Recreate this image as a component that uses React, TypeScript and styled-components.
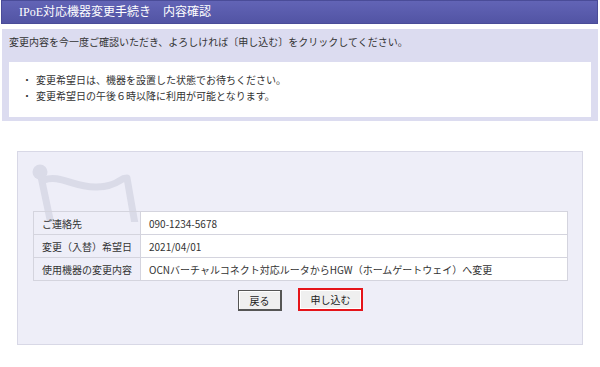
import { createGlobalStyle, styled } from "styled-components";

const GlobalStyle = createGlobalStyle`
body{
  margin:0;
  background:#fff;
  font-family:"Noto Sans CJK JP","Noto Sans",sans-serif;
  color:#333;
}
`;

const Page = styled.div`
width:600px;
height:367px;
overflow:hidden;
`;

const Header = styled.h1`
margin:0 2px 0 1px;
height:22px;
border:1px solid #4a4c98;
background:linear-gradient(#6264b6, #5254a4);
color:#fff;
font-size:12px;
font-weight:normal;
line-height:22px;
padding-left:17px;
font-family:"Liberation Serif","Noto Sans CJK JP",serif;
`;

const Notice = styled.section`
margin:5px 2px 0;
background:#dcdcf0;
padding:6px 7px 4px;
`;

const Lead = styled.p`
margin:0 0 13px;
font-size:10px;
line-height:14px;
`;

const NoteBox = styled.ul`
margin:0;
list-style:none;
background:#fff;
padding:10px 0 13px 13px;
font-size:10px;
line-height:16px;
li::before{
  content:"・";
  margin-right:4px;
}
`;

const ConfirmBox = styled.section`
position:relative;
margin:30px 17px 0;
background:#eeeef8;
border:1px solid #d8d8e6;
padding:59px 14px 0 15px;
box-sizing:border-box;
height:194px;
`;

const Flag = styled.svg`
position:absolute;
left:0;
top:0;
`;

const Table = styled.table`
position:relative;
width:100%;
border-collapse:collapse;
font-size:10px;
th,td{
  border:1px solid #d4d4de;
  height:22px;
  padding:0 8px;
  text-align:left;
  font-weight:normal;
  white-space:nowrap;
}
th{
  width:88px;
  background:transparent;
}
td{
  background:#fff;
}
`;

const Buttons = styled.div`
display:flex;
justify-content:center;
align-items:center;
gap:16px;
margin-top:9px;
`;

const Button = styled.button<{ $primary?: boolean }>`
font-family:inherit;
font-size:10px;
color:#222;
background:#efefef;
height:${(p) => (p.$primary ? "23px" : "21px")};
width:${(p) => (p.$primary ? "65px" : "44px")};
padding:0;
border:${(p) => (p.$primary ? "2px solid #e5141a" : "1px solid #555")};
border-right-width:2px;
border-bottom-width:2px;
box-shadow:${(p) => (p.$primary ? "inset 0 0 0 1px #fff" : "inset 1px 1px 0 #fff")};
margin-top:${(p) => (p.$primary ? "-2px" : "0")};
`;

const rows = [
  ["ご連絡先", "090-1234-5678"],
  ["変更（入替）希望日", "2021/04/01"],
  ["使用機器の変更内容", "OCNバーチャルコネクト対応ルータからHGW（ホームゲートウェイ）へ変更"],
];

function App() {
  return (
    <Page>
      <GlobalStyle />
      <Header>IPoE対応機器変更手続き　内容確認</Header>
      <Notice>
        <Lead>変更内容を今一度ご確認いただき、よろしければ〔申し込む〕をクリックしてください。</Lead>
        <NoteBox>
          <li>変更希望日は、機器を設置した状態でお待ちください。</li>
          <li>変更希望日の午後６時以降に利用が可能となります。</li>
        </NoteBox>
      </Notice>
      <ConfirmBox>
        <Flag width="140" height="70" viewBox="0 0 140 70">
          <g fill="none" stroke="#dadbe8" strokeWidth="7" strokeLinecap="round" strokeLinejoin="round">
            <path d="M22 20 L33 72" />
            <path d="M26 28 C42 22 56 36 79 35 S100 26 109 26 L117 72" />
          </g>
          <circle cx="22" cy="20" r="7.5" fill="#dadbe8" />
        </Flag>
        <Table>
          <tbody>
            {rows.map(([k, v]) => (
              <tr key={k}>
                <th>{k}</th>
                <td>{v}</td>
              </tr>
            ))}
          </tbody>
        </Table>
        <Buttons>
          <Button>戻る</Button>
          <Button $primary>申し込む</Button>
        </Buttons>
      </ConfirmBox>
    </Page>
  );
}

export default App;
